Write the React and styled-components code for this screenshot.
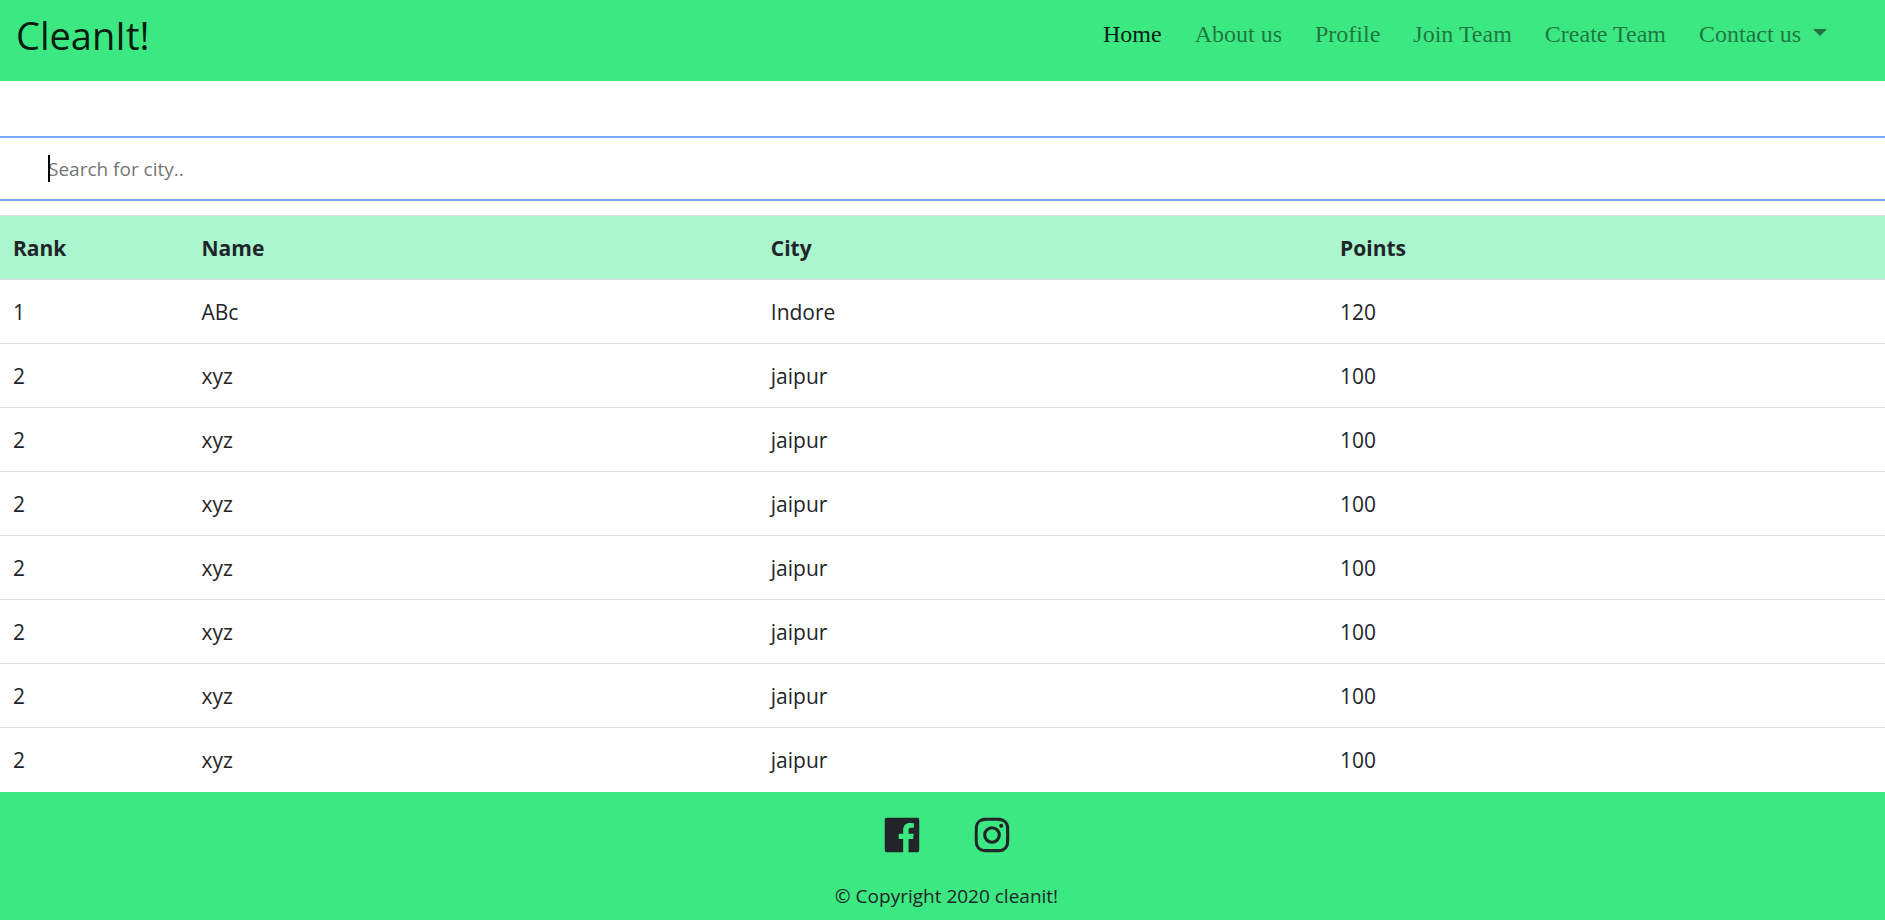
import React from "react";
import styled, { createGlobalStyle } from "styled-components";
import { BiLogoFacebookSquare, BiLogoInstagram } from "react-icons/bi";

const GlobalStyle = createGlobalStyle`
  *, *::before, *::after { box-sizing: border-box; }
  body {
    margin: 0;
    background: #fff;
    color: #212529;
    font-family: "Segoe UI", "Open Sans", "Noto Sans", sans-serif;
  }
`;

const Page = styled.div`
  display: flex;
  flex-direction: column;
  min-height: 100vh;
`;

const Navbar = styled.nav`
  display: flex;
  justify-content: space-between;
  align-items: flex-start;
  padding: 8px 58px 18px 16px;
  background: #3ce882;
`;

const Brand = styled.a`
  color: rgba(0, 0, 0, 0.9);
  font-size: 38px;
  line-height: 55px;
  text-decoration: none;
`;

const NavList = styled.ul`
  display: flex;
  gap: 33px;
  margin: 0;
  padding: 8px 0 0;
  list-style: none;
`;

const NavLink = styled.a`
  display: flex;
  align-items: center;
  gap: 12px;
  color: ${(p) => (p.$active ? "rgba(0, 0, 0, 0.9)" : "rgba(0, 0, 0, 0.5)")};
  font-family: "Times New Roman", "Liberation Serif", serif;
  font-size: 24px;
  line-height: 36px;
  text-decoration: none;
`;

const Caret = styled.span`
  margin-bottom: 4px;
  border: 7px solid transparent;
  border-top-color: currentColor;
  border-bottom: 0;
`;

const SearchBar = styled.div`
  position: relative;
  margin: 55px 0 14px;

  &::before {
    content: "";
    position: absolute;
    top: 19px;
    left: 48px;
    width: 2px;
    height: 27px;
    background: #000;
  }
`;

const SearchInput = styled.input`
  display: block;
  width: 100%;
  padding: 17px 48px 15px;
  border: solid #7baaf7;
  border-width: 2px 0;
  outline: 0;
  background: #fff;
  color: #212529;
  caret-color: transparent;
  font-family: inherit;
  font-size: 19px;
  line-height: 29px;

  &::placeholder {
    color: #757575;
    opacity: 1;
  }
`;

const Table = styled.table`
  width: 100%;
  table-layout: fixed;
  border-collapse: collapse;
  font-size: 21px;
  line-height: 31px;
  text-align: left;
`;

const Row = styled.tr`
  height: 64px;
  border-top: 1px solid #dddddd;
  background: ${(p) => (p.$header ? "#aaf6ce" : "#fff")};
`;

const HeadCell = styled.th`
  width: ${(p) => p.$width};
  padding: 2px 13px 0;
  font-weight: 700;
`;

const Cell = styled.td`
  padding: 2px 13px 0;
`;

const Footer = styled.footer`
  display: flex;
  flex: 1;
  flex-direction: column;
  align-items: center;
  gap: 24px;
  padding: 20px 0 8px 8px;
  background: #3ce882;
`;

const Social = styled.div`
  display: flex;
  gap: 44px;
`;

const SocialLink = styled.a`
  display: flex;
  color: inherit;
`;

const Copyright = styled.p`
  margin: 0;
  font-size: 19px;
  line-height: 29px;
`;

const links = ["Home", "About us", "Profile", "Join Team", "Create Team", "Contact us"];

const columns = [
  { label: "Rank", width: "10%" },
  { label: "Name", width: "30.2%" },
  { label: "City", width: "30.2%" },
  { label: "Points", width: "auto" },
];

const rows = [
  ["1", "ABc", "Indore", "120"],
  ...Array.from({ length: 7 }, () => ["2", "xyz", "jaipur", "100"]),
];

export default function App() {
  return (
    <Page>
      <GlobalStyle />
      <Navbar>
        <Brand href="#">CleanIt!</Brand>
        <NavList>
          {links.map((label, i) => (
            <li key={label}>
              <NavLink href="#" $active={i === 0}>
                {label}
                {label === "Contact us" && <Caret />}
              </NavLink>
            </li>
          ))}
        </NavList>
      </Navbar>
      <main>
        <SearchBar>
          <SearchInput type="text" aria-label="Search for city" placeholder="Search for city.." />
        </SearchBar>
        <Table>
          <thead>
            <Row $header>
              {columns.map((c) => (
                <HeadCell key={c.label} scope="col" $width={c.width}>
                  {c.label}
                </HeadCell>
              ))}
            </Row>
          </thead>
          <tbody>
            {rows.map((row, i) => (
              <Row key={i}>
                {row.map((value, j) => (
                  <Cell key={j}>{value}</Cell>
                ))}
              </Row>
            ))}
          </tbody>
        </Table>
      </main>
      <Footer>
        <Social>
          <SocialLink href="#" aria-label="Facebook">
            <BiLogoFacebookSquare size={46} />
          </SocialLink>
          <SocialLink href="#" aria-label="Instagram">
            <BiLogoInstagram size={46} />
          </SocialLink>
        </Social>
        <Copyright>© Copyright 2020 cleanit!</Copyright>
      </Footer>
    </Page>
  );
}
